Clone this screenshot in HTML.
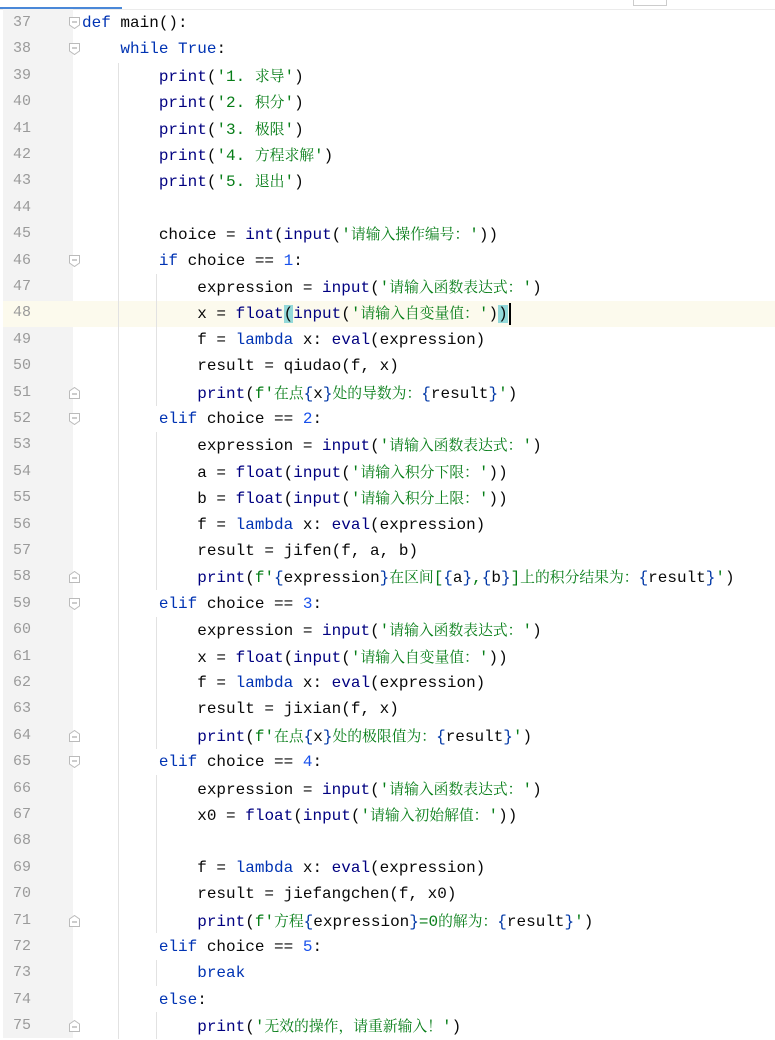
<!DOCTYPE html>
<html><head><meta charset="utf-8"><style>
body{margin:0;width:775px;height:1038px;background:#fff;overflow:hidden;position:relative;font-family:"Liberation Mono",monospace;font-size:16px;color:#080808}
.g{position:absolute;left:3px;top:9px;width:70px;height:1029px;background:#f3f3f3}
.ln{position:absolute;left:0;width:44px;text-align:right;color:#9a9a9a;font-size:15px}
.l{position:absolute;left:82px;white-space:pre;height:26px;line-height:26px}
.cur{position:absolute;left:3px;width:772px;height:26px;background:#fcfaed}
.k{color:#0033b3}.b{color:#000080}.s{color:#067d17}.n{color:#1750eb}.br{color:#0037a6}
.c{font-family:"Noto Serif CJK SC","Noto Sans CJK SC",serif;font-size:14.8px}
.f{position:absolute;left:69px;width:11px;height:12px}
.hl{background:#93d9d9}
.v{position:absolute;width:1px;background:#e2e2e2}
</style></head><body>
<div style="position:absolute;left:0;top:7px;width:122px;height:2px;background:#4a88d8"></div>
<div style="position:absolute;left:0;top:9px;width:775px;height:1px;background:#ebebeb"></div>
<div style="position:absolute;left:633px;top:0;width:32px;height:5px;border:1px solid #ccc;border-top:none"></div>
<div class="g"></div>
<div class="cur" style="top:301px"></div>
<div class="v" style="left:118px;top:63px;height:976px"></div>
<div class="v" style="left:156px;top:274px;height:132px"></div>
<div class="v" style="left:156px;top:432px;height:158px"></div>
<div class="v" style="left:156px;top:617px;height:132px"></div>
<div class="v" style="left:156px;top:775px;height:158px"></div>
<div class="v" style="left:156px;top:960px;height:26px"></div>
<div class="v" style="left:156px;top:1012px;height:27px"></div>
<div id="c"></div>
<script>
var L=[
'<span class="k">def</span> main():',
'    <span class="k">while</span> <span class="k">True</span>:',
'        <span class="b">print</span>(<span class="s">\'1. <span class="c">求导</span>\'</span>)',
'        <span class="b">print</span>(<span class="s">\'2. <span class="c">积分</span>\'</span>)',
'        <span class="b">print</span>(<span class="s">\'3. <span class="c">极限</span>\'</span>)',
'        <span class="b">print</span>(<span class="s">\'4. <span class="c">方程求解</span>\'</span>)',
'        <span class="b">print</span>(<span class="s">\'5. <span class="c">退出</span>\'</span>)',
'',
'        choice = <span class="b">int</span>(<span class="b">input</span>(<span class="s">\'<span class="c">请输入操作编号：</span>\'</span>))',
'        <span class="k">if</span> choice == <span class="n">1</span>:',
'            expression = <span class="b">input</span>(<span class="s">\'<span class="c">请输入函数表达式：</span>\'</span>)',
'            x = <span class="b">float</span><span class="hl">(</span><span class="b">input</span>(<span class="s">\'<span class="c">请输入自变量值：</span>\'</span>)<span class="hl">)</span>',
'            f = <span class="k">lambda</span> x: <span class="b">eval</span>(expression)',
'            result = qiudao(f, x)',
'            <span class="b">print</span>(<span class="s">f\'<span class="c">在点</span></span><span class="br">{</span>x<span class="br">}</span><span class="s"><span class="c">处的导数为：</span></span><span class="br">{</span>result<span class="br">}</span><span class="s">\'</span>)',
'        <span class="k">elif</span> choice == <span class="n">2</span>:',
'            expression = <span class="b">input</span>(<span class="s">\'<span class="c">请输入函数表达式：</span>\'</span>)',
'            a = <span class="b">float</span>(<span class="b">input</span>(<span class="s">\'<span class="c">请输入积分下限：</span>\'</span>))',
'            b = <span class="b">float</span>(<span class="b">input</span>(<span class="s">\'<span class="c">请输入积分上限：</span>\'</span>))',
'            f = <span class="k">lambda</span> x: <span class="b">eval</span>(expression)',
'            result = jifen(f, a, b)',
'            <span class="b">print</span>(<span class="s">f\'</span><span class="br">{</span>expression<span class="br">}</span><span class="s"><span class="c">在区间</span>[</span><span class="br">{</span>a<span class="br">}</span><span class="s">,</span><span class="br">{</span>b<span class="br">}</span><span class="s">]<span class="c">上的积分结果为：</span></span><span class="br">{</span>result<span class="br">}</span><span class="s">\'</span>)',
'        <span class="k">elif</span> choice == <span class="n">3</span>:',
'            expression = <span class="b">input</span>(<span class="s">\'<span class="c">请输入函数表达式：</span>\'</span>)',
'            x = <span class="b">float</span>(<span class="b">input</span>(<span class="s">\'<span class="c">请输入自变量值：</span>\'</span>))',
'            f = <span class="k">lambda</span> x: <span class="b">eval</span>(expression)',
'            result = jixian(f, x)',
'            <span class="b">print</span>(<span class="s">f\'<span class="c">在点</span></span><span class="br">{</span>x<span class="br">}</span><span class="s"><span class="c">处的极限值为：</span></span><span class="br">{</span>result<span class="br">}</span><span class="s">\'</span>)',
'        <span class="k">elif</span> choice == <span class="n">4</span>:',
'            expression = <span class="b">input</span>(<span class="s">\'<span class="c">请输入函数表达式：</span>\'</span>)',
'            x0 = <span class="b">float</span>(<span class="b">input</span>(<span class="s">\'<span class="c">请输入初始解值：</span>\'</span>))',
'',
'            f = <span class="k">lambda</span> x: <span class="b">eval</span>(expression)',
'            result = jiefangchen(f, x0)',
'            <span class="b">print</span>(<span class="s">f\'<span class="c">方程</span></span><span class="br">{</span>expression<span class="br">}</span><span class="s">=0<span class="c">的解为：</span></span><span class="br">{</span>result<span class="br">}</span><span class="s">\'</span>)',
'        <span class="k">elif</span> choice == <span class="n">5</span>:',
'            <span class="k">break</span>',
'        <span class="k">else</span>:',
'            <span class="b">print</span>(<span class="s">\'<span class="c">无效的操作，请重新输入！</span>\'</span>)'
];
var open=[37,38,46,52,59,65],close=[51,58,64,71,75];
var h='';
for(var i=0;i<L.length;i++){var t=10+i*26.4;var n=37+i;
h+='<div class="ln" style="top:'+t+'px;line-height:26px;height:26px;left:-13px">'+n+'</div>';
h+='<div class="l" style="top:'+t+'px">'+L[i]+'</div>';
if(open.indexOf(n)>=0)h+='<svg class="f" style="top:'+(t+7)+'px" viewBox="0 0 11 12"><path d="M0.5 0.5H10.5V8L5.5 11.5L0.5 8Z" fill="#fff" stroke="#bbb"/><path d="M3 5H8" stroke="#999"/></svg>';
if(close.indexOf(n)>=0)h+='<svg class="f" style="top:'+(t+7)+'px" viewBox="0 0 11 12"><path d="M0.5 11.5H10.5V4L5.5 0.5L0.5 4Z" fill="#fff" stroke="#bbb"/><path d="M3 7H8" stroke="#999"/></svg>';}
h+='<div style="position:absolute;left:509px;top:303px;width:2px;height:22px;background:#000"></div>';
document.getElementById('c').innerHTML=h;
</script>
</body></html>
